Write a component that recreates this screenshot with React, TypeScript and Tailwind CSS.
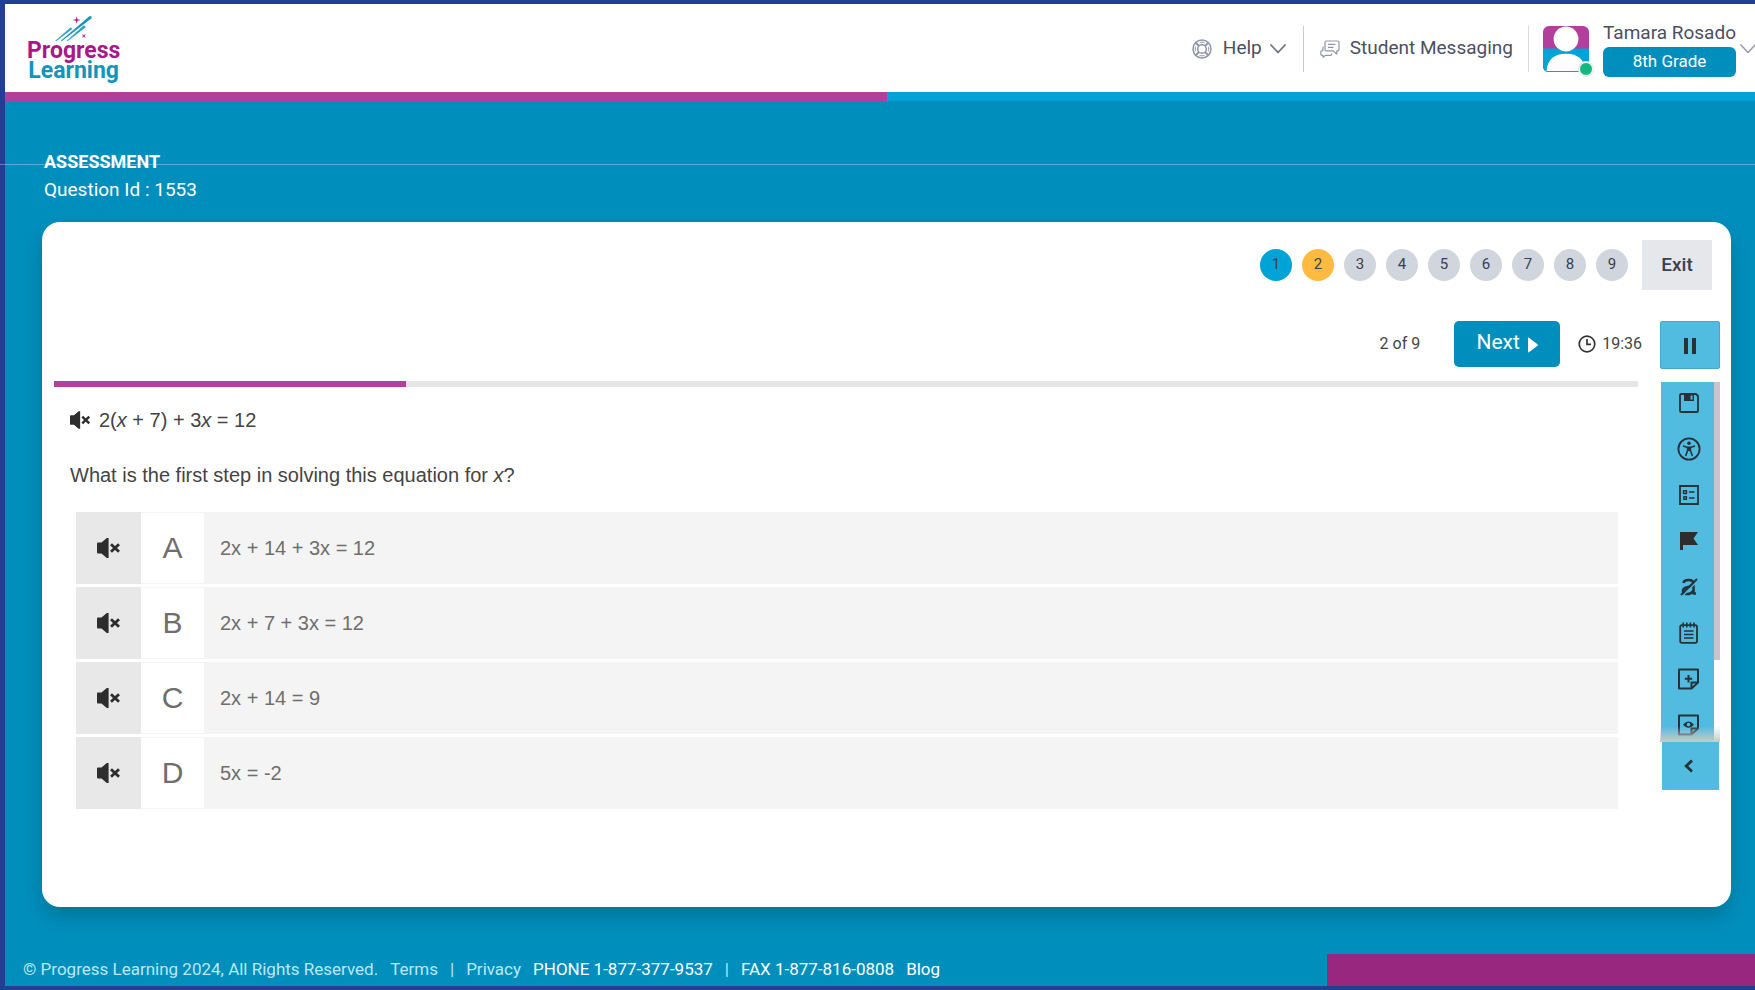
import type { ReactNode } from "react";

const questions = [1, 2, 3, 4, 5, 6, 7, 8, 9];

const options = [
  { letter: "A", text: "2x + 14 + 3x = 12" },
  { letter: "B", text: "2x + 7 + 3x = 12" },
  { letter: "C", text: "2x + 14 = 9" },
  { letter: "D", text: "5x = -2" },
];

function Speaker({ className }: { className: string }) {
  return (
    <svg viewBox="0 0 24 20" className={className} aria-hidden="true">
      <path d="M0 5.5Q0 4.5 1 4.5H4.5L9.8 0H11.6V20H9.8L4.5 15.5H1Q0 15.5 0 14.5Z" fill="#2d2d2d" />
      <path d="M14 6.2L22 13.8M22 6.2L14 13.8" stroke="#2d2d2d" strokeWidth="2.8" fill="none" />
    </svg>
  );
}

function Chevron({ className }: { className: string }) {
  return (
    <svg viewBox="0 0 18 12" className={className} fill="none" stroke="currentColor" strokeWidth="1.8" strokeLinecap="round" strokeLinejoin="round" aria-hidden="true">
      <path d="M2 2l7 7.5L16 2" />
    </svg>
  );
}

function Logo() {
  return (
    <a href="#home" className="flex flex-col items-center pl-[22px] text-[23px] leading-[20px] font-bold">
      <svg viewBox="0 0 38 26" className="h-[26px] w-[38px]" aria-hidden="true">
        <g fill="#1795b8">
          <path d="M0 26L15.4 12.4Q17.2 12.4 17 14.2L1.5 26Z" opacity=".85" />
          <path d="M5.5 26L34.4 1.2Q37 0.6 36.6 3.2L7 26Z" />
          <path d="M11.5 26L28.6 10.6Q30.8 10.4 30.4 12.4L12.8 26Z" opacity=".9" />
        </g>
        <path d="M21.7 1.2L22.5 4.2L25.6 5L22.5 5.8L21.7 9L20.9 5.8L17.8 5L20.9 4.2Z" fill="#a71f85" />
        <path d="M26.8 18.9L28.8 20.1L30.8 18.9L29.6 20.9L30.8 22.9L28.8 21.7L26.8 22.9L28 20.9Z" fill="#c12ba0" />
      </svg>
      <span className="text-[#a8188a]">Progress</span>
      <span className="text-[#1294bb]">Learning</span>
    </a>
  );
}

function Tool({ label, children }: { label: string; children: ReactNode }) {
  return (
    <button type="button" aria-label={label} className="flex h-[46px] w-full shrink-0 items-center justify-center pb-1 pl-0.5">
      <svg viewBox="0 0 24 24" className="size-6" fill="none" stroke="#263238" strokeWidth="1.8" strokeLinejoin="round" aria-hidden="true">
        {children}
      </svg>
    </button>
  );
}

function Toolbar() {
  return (
    <div className="mt-[13px] flex w-full flex-col">
      <div className="relative h-[360px] overflow-hidden pr-[6px]">
        <div className="ml-px flex h-full flex-col bg-[#51bbe0]">
          <Tool label="Save">
            <path d="M3 4.3Q3 3 4.3 3H19L21 5V19.7Q21 21 19.7 21H4.3Q3 21 3 19.7Z" />
            <path d="M7 3H17V10H7Z" fill="#263238" stroke="none" />
            <path d="M13.6 4.5H15.6V8.5H13.6Z" fill="#51bbe0" stroke="none" />
          </Tool>
          <Tool label="Accessibility">
            <circle cx="12" cy="12" r="10.6" />
            <circle cx="12" cy="6.3" r="1.8" fill="#263238" stroke="none" />
            <path d="M6 9L10.2 10.2H13.8L18 9M10.6 10.2V13.5L8.6 19M13.4 10.2V13.5L15.4 19M12 10.2V14" strokeWidth="1.6" />
          </Tool>
          <Tool label="Answer list">
            <path d="M3 3H21V21H3Z" strokeLinejoin="miter" />
            <path d="M6.5 7.7H9.5V10.5H6.5ZM6.8 13.7H9.4V16.3H6.8Z" strokeWidth="1.4" />
            <path d="M12 9H17.5M12 15H17.5" strokeWidth="1.7" />
          </Tool>
          <Tool label="Flag">
            <path d="M3 3H21L16.5 9.5L21 16H6V21H3Z" fill="#2d2d2d" stroke="none" />
          </Tool>
          <Tool label="Text off">
            <path d="M6.5 8Q6.8 5 11.8 5Q16.5 5 16.5 9V18.5H19M16.5 11.5Q6 11.5 6 16Q6 19 9.8 19Q14.5 19 16.5 15.5" strokeWidth="2.6" />
            <path d="M21 5.5L5.5 21" stroke="#51bbe0" strokeWidth="1.6" />
            <path d="M20 4L4 20" strokeWidth="2" />
          </Tool>
          <Tool label="Notepad">
            <path d="M3.2 6Q3.2 4.2 5 4.2H18.2Q20 4.2 20 6V20Q20 21.8 18.2 21.8H5Q3.2 21.8 3.2 20Z" />
            <path d="M6.2 1.5V6.5M9.8 1.5V6.5M13.4 1.5V6.5M17 1.5V6.5" strokeWidth="1.6" />
            <path d="M7 10H16.5M7 13.5H16.5M7 17H16.5" strokeWidth="1.7" />
          </Tool>
          <Tool label="Add note">
            <path d="M2 2.5H21V15.5L14.5 21.5H2Z" strokeWidth="2" />
            <path d="M14.5 21.5V15.5H21M11.5 8V15.4M7.8 11.7H15.2" strokeWidth="2" />
          </Tool>
          <Tool label="View note">
            <path d="M2 2.5H21V15.5L14.5 21.5H2Z" strokeWidth="2" />
            <path d="M14.5 21.5V15.5H21" strokeWidth="2" />
            <path d="M6 11.8Q11.5 5 17 11.8Q11.5 18 6 11.8Z" fill="#263238" stroke="none" />
            <circle cx="11.5" cy="11.6" r="1.8" fill="#51bbe0" stroke="none" />
          </Tool>
        </div>
        <div className="absolute top-0 right-0 h-[278px] w-[6px] bg-[#c6c6c6]" />
        <div className="absolute inset-x-0 bottom-0 h-4 bg-linear-to-b from-transparent to-[#c9c9c9]" />
      </div>
      <button type="button" aria-label="Collapse tools" className="mr-px ml-0.5 flex h-12 items-center justify-center bg-[#51bbe0]">
        <svg viewBox="0 0 10 14" className="mr-1 h-[14px] w-[10px]" fill="none" stroke="#263238" strokeWidth="2.8" aria-hidden="true">
          <path d="M8 1.5L2.2 7L8 12.5" />
        </svg>
      </button>
    </div>
  );
}

function Header() {
  return (
    <header className="flex h-[88px] items-center justify-between overflow-hidden bg-white">
      <Logo />
      <div className="-mr-0.5 flex shrink-0 items-center pt-px text-[19px] text-[#4b5060]">
        <button type="button" className="flex items-center">
          <svg viewBox="0 0 20 20" className="mr-[11px] size-5" fill="none" stroke="#8f97a6" strokeWidth="1.5" aria-hidden="true">
            <circle cx="10" cy="10" r="9" />
            <circle cx="10" cy="10" r="4.3" />
            <circle cx="10" cy="10" r="6.8" strokeWidth="1" strokeDasharray="5 5.68" strokeDashoffset="2.5" />
            <path d="M3.6 3.6L7 7M16.4 3.6L13 7M3.6 16.4L7 13M16.4 16.4L13 13" strokeWidth="2" />
          </svg>
          Help
          <Chevron className="ml-[7px] h-3 w-[18px] text-[#6b7280]" />
        </button>
        <div className="mx-4 h-[46px] w-px bg-[#c9ccd2]" />
        <button type="button" className="flex items-center">
          <svg viewBox="0 0 20 18" className="mr-2.5 h-[18px] w-5" fill="none" stroke="#8f97a6" strokeWidth="1.2" strokeLinejoin="round" aria-hidden="true">
            <path d="M6.4 1H17.6Q19 1 19 2.4V9.4Q19 10.8 17.6 10.8H16.8V14L13 10.8H6.4Q5 10.8 5 9.4V2.4Q5 1 6.4 1Z" />
            <path d="M8 4.4H15.5M8 7.4H13.5" />
            <path d="M3.2 6.5L2.7 10.6H2.2Q.8 10.8 .8 12V14Q.8 15.4 2.2 15.4H3V17.2L5.4 15.4H10.4Q11.8 15.4 11.8 13.4" />
          </svg>
          Student Messaging
        </button>
        <div className="mr-[14px] ml-[15px] h-[46px] w-px bg-[#d8dade]" />
        <div className="relative mr-[14px] size-[46px]">
          <svg viewBox="0 0 46 46" className="size-[46px]" aria-hidden="true">
            <rect width="46" height="46" rx="6" fill="#b23f9c" />
            <path d="M0 22.5H46V40Q46 46 40 46H6Q0 46 0 40Z" fill="#00a3d6" />
            <circle cx="23" cy="13" r="12.4" fill="#fff" />
            <path d="M3.5 45Q5 27.8 23 27.8Q41 27.8 42.5 45Z" fill="#fff" />
          </svg>
          <span className="absolute -right-1 -bottom-1 size-[14px] rounded-full border border-white bg-[#12b981] ring-1 ring-[#e5e7eb]" />
        </div>
        <div className="flex flex-col">
          <span className="text-[19px] leading-[26px]">Tamara Rosado</span>
          <span className="mt-px flex h-[30px] items-center justify-center rounded-md bg-[#008fbd] text-[17px] text-white">8th Grade</span>
        </div>
        <button type="button" aria-label="Account menu" className="ml-[3px]">
          <Chevron className="h-3 w-[18px] text-[#9ca3af]" />
        </button>
      </div>
    </header>
  );
}

function dotColor(n: number) {
  if (n === 1) return "bg-[#00a3d6]";
  if (n === 2) return "bg-[#ffbb40]";
  return "bg-[#d1d5dd]";
}

export default function App() {
  return (
    <div className="relative flex min-h-screen flex-col border-t-4 border-b-4 border-l-5 border-[#233f94] bg-[#008fbd] font-['Roboto',sans-serif]">
      <Header />
      <div className="flex h-[9px] bg-[#00a3d6]">
        <div className="w-[50.4%] bg-[#b23f9c]" />
      </div>

      <main className="flex flex-1 flex-col pr-6 pl-[37px]">
        <div className="mt-[47px] mb-[18px] pl-0.5 text-[19px] leading-[28px] text-white">
          <h1 className="text-lg leading-[28px] font-bold">ASSESSMENT</h1>
          <p>Question Id : 1553</p>
        </div>

        <section className="flex-1 rounded-[18px] bg-white pt-[18px] pr-[11px] pl-3 shadow-[0_10px_20px_rgba(0,0,0,0.18)]">
          <div className="flex items-center justify-end pr-2">
            <nav aria-label="Questions" className="mr-[14px] flex gap-[10px]">
              {questions.map((n) => (
                <button key={n} type="button" className={`flex size-8 items-center justify-center rounded-full pb-px text-[15px] text-[#374151] ${dotColor(n)}`}>
                  {n}
                </button>
              ))}
            </nav>
            <button type="button" className="h-[50px] w-[70px] bg-[#e5e7eb] text-[19px] font-medium text-[#374151]">
              Exit
            </button>
          </div>

          <div className="mt-[31px] flex gap-[18px]">
            <div className="min-w-0 flex-1 font-['Liberation_Sans',sans-serif] text-[#444]">
              <div className="flex h-[46px] items-center justify-end text-base font-['Roboto',sans-serif]">
                <span className="mr-[34px]">2 of 9</span>
                <button type="button" className="mr-[18px] flex h-[46px] w-[106px] items-center justify-center gap-2 rounded-[5px] bg-[#008fbd] pb-0.5 text-[21px] text-white">
                  Next
                  <svg viewBox="0 0 10 16" className="mt-1 h-4 w-[10px]" fill="#fff" aria-hidden="true">
                    <path d="M0 1.5Q0 0 1.3 1L9.5 7.2Q10.3 8 9.5 8.8L1.3 15Q0 16 0 14.5Z" />
                  </svg>
                </button>
                <svg viewBox="0 0 18 18" className="mr-1.5 size-[18px]" fill="none" stroke="#333" strokeWidth="1.7" aria-hidden="true">
                  <circle cx="9" cy="9" r="7.8" />
                  <path d="M9 4V9.3H13" />
                </svg>
                <span>19:36</span>
              </div>
              <div className="mt-[14px] mr-1 h-[6px] bg-[#e6e6e6]">
                <div className="h-full w-[22.2%] bg-[#b23f9c]" />
              </div>

              <div className="pr-6 pl-4 text-[20px] leading-[28px]">
                <p className="mt-[19px] flex items-center">
                  <button type="button" aria-label="Read question aloud" className="mr-2">
                    <Speaker className="h-[18px] w-[21px]" />
                  </button>
                  <span>
                    2(<i>x</i> + 7) + 3<i>x</i> = 12
                  </span>
                </p>
                <p className="mt-[27px]">
                  What is the first step in solving this equation for <i>x</i>?
                </p>
                <ul className="mt-[23px] ml-[6px] flex flex-col gap-[3px] text-[#6e6e6e]">
                  {options.map((o) => (
                    <li key={o.letter} className="flex h-[72px] bg-[#f4f4f4]">
                      <button type="button" aria-label={`Read option ${o.letter} aloud`} className="flex w-[65px] items-center justify-center bg-[#e8e8e8]">
                        <Speaker className="h-5 w-6" />
                      </button>
                      <button type="button" className="flex flex-1 items-stretch text-left">
                        <span className="my-px flex w-[63px] items-center justify-center bg-white text-[30px]">{o.letter}</span>
                        <span className="flex items-center pl-4">{o.text}</span>
                      </button>
                    </li>
                  ))}
                </ul>
              </div>
            </div>

            <div className="w-[60px] shrink-0">
              <button type="button" aria-label="Pause" className="flex h-12 w-full items-center justify-center rounded-xs border border-[#46a8ca] bg-[#51bbe0]">
                <svg viewBox="0 0 12 16" className="mt-0.5 h-4 w-3" fill="#263238" aria-hidden="true">
                  <path d="M0 0H4V16H0ZM8 0H12V16H8Z" />
                </svg>
              </button>
              <Toolbar />
            </div>
          </div>
        </section>
      </main>

      <footer className="flex h-[79px] items-end justify-between text-[17px] text-[#b9e8f7]">
        <div className="mb-[5px] flex items-center pl-[18px] leading-6">
          <span className="mr-3">© Progress Learning 2024, All Rights Reserved.</span>
          <a href="#terms">Terms</a>
          <span className="mx-3">|</span>
          <a href="#privacy">Privacy</a>
          <span className="ml-3 text-white">PHONE 1-877-377-9537</span>
          <span className="mx-3">|</span>
          <span className="mr-3 text-white">FAX 1-877-816-0808</span>
          <a href="#blog" className="text-white">Blog</a>
        </div>
        <div className="h-8 w-[428px] bg-[#97277f]" />
      </footer>

      <div className="pointer-events-none absolute top-[160px] right-0 -left-[5px] h-px bg-white/30" />
    </div>
  );
}
